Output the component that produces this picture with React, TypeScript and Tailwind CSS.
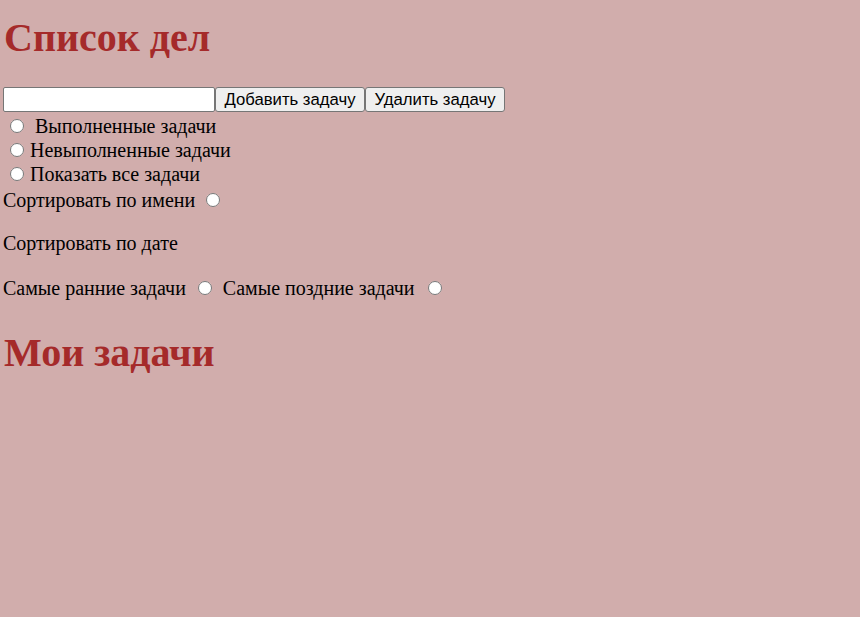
import React from "react";

const radio = "m-0 h-[14px] w-[14px] align-baseline";

const App: React.FC = () => {
  return (
    <div className="min-h-[617px] w-full bg-[#d1adac] pl-[3px] font-['Liberation_Serif',serif] text-[20px] text-black">
      <h1 className="pt-[15px] pl-px text-[40px] leading-[46px] font-bold text-[#a52a2a]">
        Список дел
      </h1>

      {/* add / remove row */}
      <div className="mt-[26px] flex h-[25px]">
        <input
          type="text"
          className="w-[212px] rounded-[2px] border border-[#767676] bg-white px-[2px] font-['Liberation_Sans',sans-serif] text-[16px]"
        />
        <button className="w-[150px] rounded-[3px] border border-[#767676] bg-[#efefef] font-['Liberation_Sans',sans-serif] text-[16.7px] leading-[23px]">
          Добавить задачу
        </button>
        <button className="w-[140px] rounded-[3px] border border-[#767676] bg-[#efefef] font-['Liberation_Sans',sans-serif] text-[16.7px] leading-[23px]">
          Удалить задачу
        </button>
      </div>

      {/* filters */}
      <div className="mt-[2px] leading-[24px]">
        <div className="h-6">
          <input type="radio" name="filter" className={radio + " mr-[3px] ml-[7px]"} />{" "}
          <span className="ml-[3px]">Выполненные задачи</span>
        </div>
        <div className="h-6">
          <input type="radio" name="filter" className={radio + " mr-[6px] ml-[7px]"} />
          Невыполненные задачи
        </div>
        <div className="h-6">
          <input type="radio" name="filter" className={radio + " mr-[6px] ml-[7px]"} />
          Показать все задачи
        </div>
      </div>

      {/* sort */}
      <div className="mt-[2px] h-6 leading-[24px]">
        Сортировать по имени{" "}
        <input type="radio" name="sortName" className={radio + " mr-[3px] ml-[6px]"} />
      </div>
      <div className="mt-[19px] h-6 leading-[24px]">Сортировать по дате</div>
      <div className="mt-[21px] h-6 leading-[24px]">
        Самые ранние задачи{" "}
        <input type="radio" name="sortDate" className={radio + " mr-[6px] ml-[7px]"} />{" "}
        Самые поздние задачи{" "}
        <input type="radio" name="sortDate" className={radio + " mr-[3px] ml-[8px]"} />
      </div>

      <h1 className="mt-[30px] pl-px text-[40px] leading-[46px] font-bold text-[#a52a2a]">
        Мои задачи
      </h1>
    </div>
  );
};

export default App;
